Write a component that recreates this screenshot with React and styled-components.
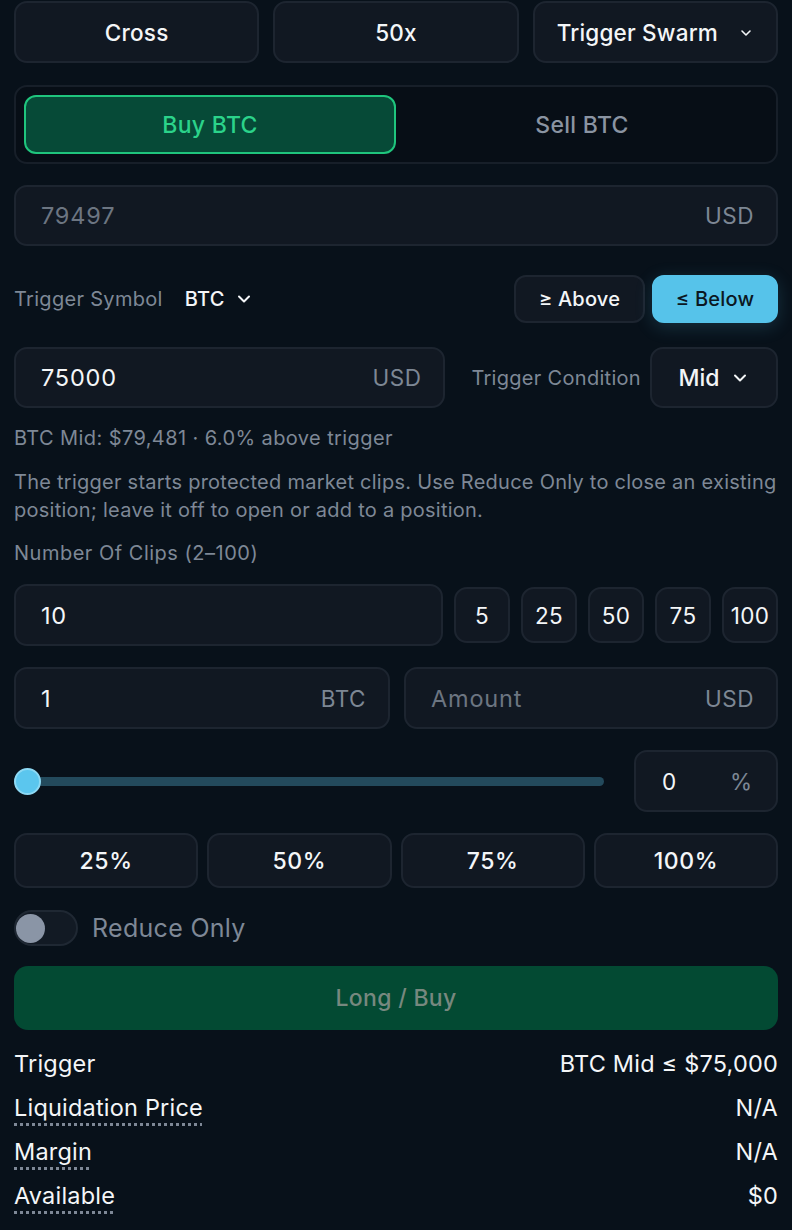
import styled, { createGlobalStyle } from 'styled-components';

const GlobalStyle = createGlobalStyle`
  html, body {
    margin: 0;
    padding: 0;
    background: #08111a;
  }
  body {
    font-family: Inter, "Liberation Sans", sans-serif;
    color: #f3f5f7;
  }
  * { box-sizing: border-box; }
`;

function Chevron({ size = 16, color = 'currentColor', width = 2 }) {
  return (
    <svg width={size} height={size} viewBox="0 0 24 24" fill="none" stroke={color} strokeWidth={width} strokeLinecap="round" strokeLinejoin="round">
      <path d="m6 9 6 6 6-6" />
    </svg>
  );
}

export default function App() {
  return (
    <Page>
      <GlobalStyle />
      <TopRow>
        <TopButton>Cross</TopButton>
        <TopButton>50x</TopButton>
        <TopButton $gap={20}>
          Trigger Swarm <Chevron size={16} width={2.4} />
        </TopButton>
      </TopRow>

      <SideSwitch>
        <SideButton $active>Buy BTC</SideButton>
        <SideButton>Sell BTC</SideButton>
      </SideSwitch>

      <Field $h={61} $mt={21}>
        <FieldValue $muted>79497</FieldValue>
        <Unit>USD</Unit>
      </Field>

      <SymbolRow>
        <MutedLabel>Trigger Symbol</MutedLabel>
        <SymbolPick>
          BTC <Chevron size={20} width={2.4} />
        </SymbolPick>
        <DirGroup>
          <DirButton>≥ Above</DirButton>
          <DirButton $active>≤ Below</DirButton>
        </DirGroup>
      </SymbolRow>

      <ConditionRow>
        <Field $h={61} style={{ flex: 1 }}>
          <FieldValue>75000</FieldValue>
          <Unit>USD</Unit>
        </Field>
        <MutedLabel>Trigger Condition</MutedLabel>
        <MidSelect>
          Mid <Chevron size={20} width={2.4} />
        </MidSelect>
      </ConditionRow>

      <Note>BTC Mid: $79,481 · 6.0% above trigger</Note>
      <Paragraph>
        The trigger starts protected market clips. Use Reduce Only to close an existing position; leave it off to open or add to a position.
      </Paragraph>
      <ClipsLabel>Number Of Clips (2–100)</ClipsLabel>

      <ClipsRow>
        <Field $h={62} style={{ flex: 1 }}>
          <FieldValue>10</FieldValue>
        </Field>
        {['5', '25', '50', '75', '100'].map((n) => (
          <Chip key={n}>{n}</Chip>
        ))}
      </ClipsRow>

      <SizeRow>
        <Field $h={62}>
          <FieldValue>1</FieldValue>
          <Unit>BTC</Unit>
        </Field>
        <Field $h={62}>
          <FieldValue $muted>Amount</FieldValue>
          <Unit>USD</Unit>
        </Field>
      </SizeRow>

      <SliderRow>
        <Track>
          <Thumb />
        </Track>
        <PercentBox>
          <span>0</span>
          <PercentUnit>%</PercentUnit>
        </PercentBox>
      </SliderRow>

      <QuickRow>
        {['25%', '50%', '75%', '100%'].map((p) => (
          <QuickButton key={p}>{p}</QuickButton>
        ))}
      </QuickRow>

      <ToggleRow>
        <Toggle>
          <Knob />
        </Toggle>
        <ToggleLabel>Reduce Only</ToggleLabel>
      </ToggleRow>

      <Submit>Long / Buy</Submit>

      <Info>
        <InfoRow>
          <InfoKey>Trigger</InfoKey>
          <span>BTC Mid ≤ $75,000</span>
        </InfoRow>
        <InfoRow>
          <InfoKey $dotted>Liquidation Price</InfoKey>
          <span>N/A</span>
        </InfoRow>
        <InfoRow>
          <InfoKey $dotted>Margin</InfoKey>
          <span>N/A</span>
        </InfoRow>
        <InfoRow>
          <InfoKey $dotted>Available</InfoKey>
          <span>$0</span>
        </InfoRow>
      </Info>
    </Page>
  );
}

const Page = styled.div`
  width: 792px;
  height: 1230px;
  overflow: hidden;
  padding: 1px 14px 0;
  display: flex;
  flex-direction: column;
`;

const boxBase = `
  background: #111822;
  border: 2px solid #1d2530;
  border-radius: 13px;
`;

const TopRow = styled.div`
  display: grid;
  grid-template-columns: repeat(3, 1fr);
  gap: 14px;
  height: 62px;
`;

const TopButton = styled.div`
  ${boxBase}
  display: flex;
  align-items: center;
  justify-content: center;
  gap: ${({ $gap }) => $gap || 0}px;
  font-size: 22.5px;
  font-weight: 500;
  letter-spacing: 0.2px;
  color: #f4f6f8;
  svg { margin-top: 1px; }
`;

const SideSwitch = styled.div`
  margin-top: 22px;
  height: 79px;
  background: #070e16;
  border: 2px solid #171f29;
  border-radius: 13px;
  padding: 8px;
  display: grid;
  grid-template-columns: 1fr 1fr;
`;

const SideButton = styled.div`
  display: flex;
  align-items: center;
  justify-content: center;
  font-size: 23px;
  font-weight: 500;
  letter-spacing: 0.3px;
  border-radius: 12px;
  color: ${({ $active }) => ($active ? '#2bd38a' : '#8a94a2')};
  background: ${({ $active }) => ($active ? '#064a37' : 'transparent')};
  border: 2px solid ${({ $active }) => ($active ? '#1fc57d' : 'transparent')};
`;

const Field = styled.div`
  ${boxBase}
  height: ${({ $h }) => $h}px;
  margin-top: ${({ $mt }) => $mt || 0}px;
  display: flex;
  align-items: center;
  justify-content: space-between;
  padding: 0 22px 0 25px;
`;

const FieldValue = styled.span`
  font-size: 23.5px;
  color: ${({ $muted }) => ($muted ? '#6c7581' : '#f4f6f8')};
  letter-spacing: 0.8px;
`;

const Unit = styled.span`
  font-size: 22.5px;
  letter-spacing: 0.5px;
  color: #7d8794;
`;

const SymbolRow = styled.div`
  margin-top: 29px;
  height: 48px;
  display: flex;
  align-items: center;
`;

const MutedLabel = styled.span`
  font-size: 20px;
  letter-spacing: 0.3px;
  color: #7e8896;
  white-space: nowrap;
`;

const SymbolPick = styled.span`
  margin-left: 22px;
  display: flex;
  align-items: center;
  gap: 9px;
  font-size: 20px;
  font-weight: 500;
  letter-spacing: 0.3px;
  color: #f4f6f8;
`;

const DirGroup = styled.div`
  margin-left: auto;
  display: flex;
  gap: 7px;
`;

const DirButton = styled.div`
  height: 48px;
  width: ${({ $active }) => ($active ? '126px' : '131px')};
  display: flex;
  align-items: center;
  justify-content: center;
  border-radius: 12px;
  font-size: 20px;
  font-weight: 500;
  letter-spacing: 0.2px;
  color: ${({ $active }) => ($active ? '#0b1722' : '#f4f6f8')};
  background: ${({ $active }) => ($active ? '#56c3ea' : '#111822')};
  border: 2px solid ${({ $active }) => ($active ? '#56c3ea' : '#1d2530')};
  box-shadow: ${({ $active }) => ($active ? '0 4px 18px rgba(86,195,234,0.18)' : 'none')};
`;

const ConditionRow = styled.div`
  margin-top: 24px;
  display: flex;
  align-items: center;
  gap: 26px;
  & > ${MutedLabel} { margin-right: -17px; }
`;

const MidSelect = styled.div`
  ${boxBase}
  width: 128px;
  height: 61px;
  display: flex;
  align-items: center;
  justify-content: center;
  gap: 10px;
  font-size: 23px;
  font-weight: 500;
`;

const Note = styled.div`
  margin-top: 18px;
  font-size: 20px;
  letter-spacing: 0.4px;
  color: #7e8896;
  line-height: 24px;
`;

const Paragraph = styled.p`
  margin: 18px 0 0;
  font-size: 20px;
  letter-spacing: 0.25px;
  line-height: 28px;
  color: #7e8896;
`;

const ClipsLabel = styled.div`
  margin-top: 17px;
  font-size: 20px;
  letter-spacing: 0.5px;
  color: #7e8896;
  line-height: 24px;
`;

const ClipsRow = styled.div`
  margin-top: 19px;
  display: flex;
  align-items: center;
  gap: 11px;
`;

const Chip = styled.div`
  ${boxBase}
  width: 56px;
  height: 56px;
  display: flex;
  align-items: center;
  justify-content: center;
  font-size: 22.5px;
  letter-spacing: 0.4px;
  color: #f4f6f8;
`;

const SizeRow = styled.div`
  margin-top: 21px;
  display: grid;
  grid-template-columns: 376px 1fr;
  gap: 14px;
`;

const SliderRow = styled.div`
  margin-top: 21px;
  display: flex;
  align-items: center;
  gap: 30px;
`;

const Track = styled.div`
  position: relative;
  flex: 1;
  height: 9px;
  border-radius: 5px;
  background: #234a5c;
`;

const Thumb = styled.div`
  position: absolute;
  left: 0;
  top: 50%;
  width: 27px;
  height: 27px;
  margin-top: -13.5px;
  border-radius: 50%;
  background: #5bc6ee;
  border: 2px solid #8dd9f4;
`;

const PercentBox = styled.div`
  ${boxBase}
  width: 144px;
  height: 62px;
  display: flex;
  align-items: center;
  justify-content: space-between;
  padding: 0 24px 0 26px;
  font-size: 22.5px;
  color: #f4f6f8;
`;

const PercentUnit = styled.span`
  color: #7d8794;
`;

const QuickRow = styled.div`
  margin-top: 21px;
  display: grid;
  grid-template-columns: repeat(4, 1fr);
  gap: 9px;
`;

const QuickButton = styled.div`
  ${boxBase}
  height: 55px;
  display: flex;
  align-items: center;
  justify-content: center;
  font-size: 23px;
  font-weight: 500;
  letter-spacing: 0.6px;
  color: #f4f6f8;
`;

const ToggleRow = styled.div`
  margin-top: 22px;
  display: flex;
  align-items: center;
  gap: 14px;
`;

const Toggle = styled.div`
  width: 64px;
  height: 36px;
  border-radius: 18px;
  background: #121a24;
  border: 2px solid #1f2833;
  display: flex;
  align-items: center;
`;

const Knob = styled.div`
  width: 29px;
  height: 29px;
  border-radius: 50%;
  background: #8a95a6;
`;

const ToggleLabel = styled.span`
  font-size: 25px;
  letter-spacing: 0.3px;
  color: #7e8896;
`;

const Submit = styled.div`
  margin-top: 20px;
  height: 64px;
  border-radius: 14px;
  background: #034a33;
  display: flex;
  align-items: center;
  justify-content: center;
  font-size: 23px;
  font-weight: 500;
  letter-spacing: 0.3px;
  color: #77887f;
`;

const Info = styled.div`
  margin-top: 18px;
  display: flex;
  flex-direction: column;
  gap: 14px;
`;

const InfoRow = styled.div`
  display: flex;
  justify-content: space-between;
  align-items: center;
  height: 30px;
  font-size: 23.5px;
  letter-spacing: 0.2px;
  color: #f4f6f8;
`;

const InfoKey = styled.span`
  ${({ $dotted }) =>
    $dotted
      ? `
    text-decoration: underline dotted #7e8896;
    text-decoration-thickness: 3px;
    text-underline-offset: 7px;
  `
      : ''}
`;
